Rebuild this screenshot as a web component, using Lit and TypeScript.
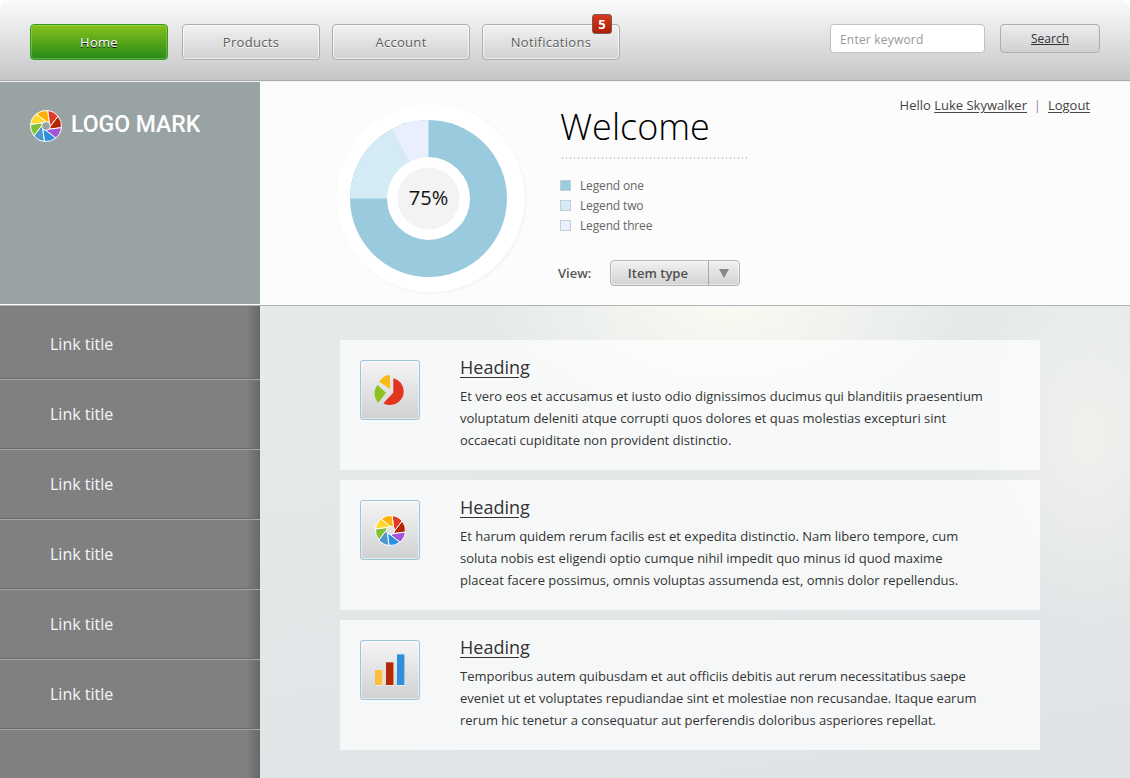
import { css, html, svg, LitElement } from "lit";
import { customElement } from "lit/decorators.js";

const BLADES = ["#e23a26", "#b52500", "#a553d9", "#2b8fe0", "#4f97cb", "#7fc035", "#ffd92f", "#ffb204"];

// aperture logo, eight blades around a small hole
function pinwheel(size: number) {
  const r = 15.5;
  const hole = 4.5;
  const at = (radius: number, deg: number) => {
    const a = (deg * Math.PI) / 180;
    return `${(radius * Math.sin(a)).toFixed(2)} ${(-radius * Math.cos(a)).toFixed(2)}`;
  };
  return html`<svg width=${size} height=${size} viewBox="-16 -16 32 32">
    ${BLADES.map((color, i) => {
      const a = 6 + i * 45;
      const d = `M${at(r, a)} A${r} ${r} 0 0 1 ${at(r, a + 45)} L${at(hole, a + 85)} L${at(hole, a + 40)} Z`;
      return svg`<path d=${d} fill=${color} stroke="#fff" stroke-width="1" stroke-linejoin="round"></path>`;
    })}
  </svg>`;
}

const pieIcon = html`<svg width="60" height="60" viewBox="0 0 60 60">
  <path d="M33.3 18.3 A13.6 13.6 0 1 1 23.3 43.3 L33.3 32.7 Z" fill="#e2351f"></path>
  <path d="M17.4 25 A13.6 13.6 0 0 0 18.3 42.7 L26 32.7 Z" fill="#8cc11f"></path>
  <path d="M19.3 21.7 A13.6 13.6 0 0 1 30 15 L30 29 Z" fill="#fdb913"></path>
</svg>`;

const barsIcon = html`<svg width="60" height="60" viewBox="0 0 60 60">
  <rect x="15" y="30" width="8" height="15.5" fill="#fff"></rect>
  <rect x="26" y="22" width="8" height="23.5" fill="#fff"></rect>
  <rect x="37" y="14" width="8" height="31.5" fill="#fff"></rect>
  <rect x="15" y="30" width="7.5" height="15" fill="#fdbf3f"></rect>
  <rect x="26" y="22.3" width="7.5" height="22.7" fill="#b52a06"></rect>
  <rect x="37" y="14.3" width="7.5" height="30.7" fill="#2f8fdc"></rect>
</svg>`;

const CARDS = [
  {
    icon: pieIcon,
    text: "Et vero eos et accusamus et iusto odio dignissimos ducimus qui blanditiis praesentium voluptatum deleniti atque corrupti quos dolores et quas molestias excepturi sint occaecati cupiditate non provident distinctio.",
  },
  {
    icon: pinwheel(31),
    text: "Et harum quidem rerum facilis est et expedita distinctio. Nam libero tempore, cum soluta nobis est eligendi optio cumque nihil impedit quo minus id quod maxime placeat facere possimus, omnis voluptas assumenda est, omnis dolor repellendus.",
  },
  {
    icon: barsIcon,
    text: "Temporibus autem quibusdam et aut officiis debitis aut rerum necessitatibus saepe eveniet ut et voluptates repudiandae sint et molestiae non recusandae. Itaque earum rerum hic tenetur a consequatur aut perferendis doloribus asperiores repellat.",
  },
];

const LEGEND = [
  { label: "Legend one", cls: "one" },
  { label: "Legend two", cls: "two" },
  { label: "Legend three", cls: "three" },
];

@customElement("app-root")
export class AppRoot extends LitElement {
  static styles = css`
    :host {
      display: block;
      width: 1130px;
      height: 778px;
      overflow: hidden;
      background: #fff;
      font-family: "Open Sans", "Noto Sans", sans-serif;
      color: #333;
    }

    .frame {
      height: 778px;
      border-radius: 10px 10px 0 0;
      overflow: hidden;
      display: flex;
      flex-direction: column;
    }

    /* top bar */
    header {
      flex: none;
      height: 81px;
      box-sizing: content-box;
      border-bottom: 1px solid #f2f3f3;
      background: linear-gradient(#a9abab, #a9abab) 0 80px / 100% 1px no-repeat,
        linear-gradient(#fafafa 0, #f4f4f4 12px, #c5c6c8 80px);
      display: flex;
      align-items: flex-start;
      padding-left: 30px;
    }

    .tabs {
      display: flex;
      gap: 12px;
      margin-top: 24px;
    }

    .tab {
      position: relative;
      box-sizing: border-box;
      width: 138px;
      height: 36px;
      display: flex;
      align-items: center;
      justify-content: center;
      border: 1px solid #adadae;
      border-radius: 4px;
      box-shadow: inset 0 0 0 1px rgba(255, 255, 255, 0.65);
      background: linear-gradient(#f2f2f2, #d1d1d3);
      color: #5c5c5c;
      font-size: 13px;
      letter-spacing: 0.3px;
      text-shadow: 0 1px 0 #fff;
    }

    .tab.active {
      margin-right: 2px;
      border: 1px solid #2f9d1e;
      box-shadow: inset 0 0 0 1px rgba(190, 230, 140, 0.35);
      background: linear-gradient(#86c21a, #288a1b);
      color: #fff;
      text-shadow: 0 1px 0 #111;
    }

    .badge {
      position: absolute;
      top: -11px;
      right: 7px;
      box-sizing: border-box;
      width: 20px;
      height: 20px;
      border: 1px solid #7c5a52;
      border-radius: 3px;
      display: flex;
      align-items: center;
      justify-content: center;
      background: linear-gradient(#d9381e, #ad1f06);
      color: #fff;
      font-size: 13px;
      font-weight: 700;
      letter-spacing: 0;
      text-shadow: none;
    }

    .search {
      margin-left: auto;
      margin-right: 30px;
      margin-top: 24px;
      display: flex;
      gap: 15px;
    }

    .search .field {
      box-sizing: border-box;
      width: 155px;
      height: 29px;
      padding: 1px 0 0 9px;
      display: flex;
      align-items: center;
      background: #fff;
      border: 1px solid #c2c2c4;
      border-radius: 4px;
      color: #999;
      font-size: 12px;
      letter-spacing: 0.2px;
    }

    .search .go {
      box-sizing: border-box;
      width: 100px;
      height: 29px;
      display: flex;
      align-items: center;
      justify-content: center;
      background: linear-gradient(#ededee, #cfd0d2);
      border: 1px solid #aeaeb0;
      border-radius: 4px;
      color: #333;
      font-size: 12px;
      text-decoration: underline;
    }

    /* hero row */
    .hero {
      flex: none;
      height: 222px;
      display: flex;
    }

    .brand {
      flex: none;
      width: 230px;
      padding: 28px 0 0 30px;
      background: #9aa3a3;
      display: flex;
      align-items: flex-start;
      gap: 9px;
    }

    .brand svg {
      flex: none;
    }

    .brand span {
      color: #fff;
      font-family: Roboto, "Liberation Sans", sans-serif;
      font-size: 23px;
      font-weight: 500;
      line-height: 29px;
    }

    .summary {
      flex: 1;
      position: relative;
      background: #fcfcfc;
      display: flex;
      padding-left: 70px;
    }

    .donut {
      flex: none;
      width: 200px;
      height: 200px;
      margin-top: 16px;
    }

    .donut text {
      font-family: "Open Sans", sans-serif;
      font-size: 20px;
      fill: #111;
    }

    .intro {
      margin-left: 30px;
      width: 260px;
    }

    h1 {
      margin: 20px 0 0;
      font-size: 36px;
      font-weight: 300;
      line-height: 50px;
      color: #000;
    }

    .dots {
      width: 187px;
      height: 2px;
      margin: 5px 0 0 2px;
      background: repeating-linear-gradient(90deg, #c2c6c6 0 1px, transparent 1px 4px);
    }

    .legend {
      margin-top: 17px;
      display: flex;
      flex-direction: column;
      gap: 2px;
    }

    .legend div {
      display: flex;
      align-items: center;
      gap: 9px;
      height: 18px;
      color: #666;
      font-size: 12px;
      letter-spacing: -0.15px;
    }

    .swatch {
      box-sizing: border-box;
      width: 11px;
      height: 11px;
      border: 1px solid #c4d0d6;
    }

    .swatch.one {
      background: #9acadd;
    }

    .swatch.two {
      background: #d4ebf5;
    }

    .swatch.three {
      background: #e9effd;
    }

    .view {
      margin: 26px 0 0 -2px;
      display: flex;
      align-items: center;
      gap: 19px;
      font-size: 13px;
      font-weight: 600;
      color: #555;
    }

    .select {
      box-sizing: border-box;
      width: 130px;
      height: 26px;
      display: flex;
      border: 1px solid #b4b4b6;
      border-radius: 4px;
      background: linear-gradient(#f1f1f1, #d3d3d5);
      box-shadow: inset 0 0 0 1px rgba(255, 255, 255, 0.5);
    }

    .select .value {
      box-sizing: border-box;
      width: 98px;
      padding-right: 4px;
      border-right: 1px solid #a9a9ab;
      text-align: center;
      line-height: 24px;
      color: #505050;
    }

    .select .arrow {
      flex: 1;
      display: flex;
      align-items: center;
      justify-content: center;
    }

    .arrow i {
      width: 0;
      height: 0;
      border-left: 5px solid transparent;
      border-right: 5px solid transparent;
      border-top: 9px solid #888;
    }

    .user {
      position: absolute;
      top: 14px;
      right: 40px;
      font-size: 13px;
      color: #444;
    }

    .user u {
      text-underline-offset: 2px;
    }

    .user b {
      font-weight: 400;
      margin: 0 3.5px;
      color: #888;
    }

    .rule {
      flex: none;
      height: 2px;
      background: linear-gradient(#fff 1px, #aeb0b0 1px);
    }

    /* lower part */
    .lower {
      flex: 1;
      display: flex;
      min-height: 0;
    }

    aside {
      flex: none;
      width: 260px;
      padding-top: 4px;
      background: linear-gradient(90deg, #808080 246px, #686868 260px);
      box-sizing: border-box;
    }

    aside a {
      box-sizing: border-box;
      display: flex;
      align-items: center;
      height: 70px;
      padding: 0 0 1px 50px;
      border-bottom: 1px solid #a6a6a6;
      box-shadow: inset 0 -1px 0 #686868;
      color: #f6f6f6;
      font-size: 16px;
    }

    main {
      flex: 1;
      padding: 34px 90px 0 80px;
      display: flex;
      flex-direction: column;
      gap: 10px;
      background:
        radial-gradient(ellipse 240px 130px at 470px 0, rgba(252, 251, 243, 0.95), rgba(252, 251, 243, 0)),
        radial-gradient(ellipse 130px 200px at 830px 130px, rgba(250, 248, 241, 0.6), rgba(250, 248, 241, 0)),
        linear-gradient(170deg, #e5ebeb, #dfe3e5);
    }

    .card {
      box-sizing: border-box;
      height: 130px;
      padding: 20px 50px 0 20px;
      display: flex;
      gap: 40px;
      background: rgba(255, 255, 255, 0.7);
    }

    .tile {
      flex: none;
      box-sizing: border-box;
      width: 60px;
      height: 60px;
      display: flex;
      align-items: center;
      justify-content: center;
      border: 1px solid #9cc3dc;
      border-radius: 3px;
      background: linear-gradient(#f5f5f5, #d0d1d2);
      box-shadow: inset 0 0 0 1px rgba(255, 255, 255, 0.5);
    }

    .tile svg {
      margin: -1px;
    }

    h2 {
      margin: -5px 0 0;
      font-size: 18px;
      font-weight: 400;
      line-height: 24px;
      color: #333;
      text-decoration: underline;
      text-underline-offset: 3px;
    }

    .card p {
      margin: 6px 0 0;
      max-width: 526px;
      font-size: 13px;
      line-height: 22px;
      color: #333;
    }
  `;

  render() {
    return html`
      <div class="frame">
        <header>
          <nav class="tabs">
            <div class="tab active">Home</div>
            <div class="tab">Products</div>
            <div class="tab">Account</div>
            <div class="tab">Notifications<span class="badge">5</span></div>
          </nav>
          <div class="search">
            <div class="field">Enter keyword</div>
            <div class="go">Search</div>
          </div>
        </header>

        <section class="hero">
          <div class="brand">${pinwheel(32)}<span>LOGO MARK</span></div>
          <div class="summary">
            <svg class="donut" viewBox="0 0 200 200">
              <defs>
                <filter id="soft" x="-10%" y="-10%" width="120%" height="120%">
                  <feDropShadow dx="1" dy="1" stdDeviation="1.5" flood-color="#000" flood-opacity="0.05"></feDropShadow>
                </filter>
              </defs>
              <circle cx="100.5" cy="100" r="94" fill="#fff" filter="url(#soft)"></circle>
              <circle cx="98.5" cy="100.5" r="78.5" fill="#9acadd"></circle>
              <path d="M20 100.5 A78.5 78.5 0 0 1 61.7 31.2 L98.5 100.5 Z" fill="#d4ebf5"></path>
              <path d="M61.7 31.2 A78.5 78.5 0 0 1 98.5 22 L98.5 100.5 Z" fill="#e9effd"></path>
              <circle cx="98.5" cy="100.5" r="41.5" fill="#fff"></circle>
              <circle cx="98.5" cy="100.5" r="31" fill="#f3f3f3"></circle>
              <text x="98.5" y="106.5" text-anchor="middle">75%</text>
            </svg>
            <div class="intro">
              <h1>Welcome</h1>
              <div class="dots"></div>
              <div class="legend">
                ${LEGEND.map(
                  (l) => html`<div><span class="swatch ${l.cls}"></span>${l.label}</div>`
                )}
              </div>
              <div class="view">
                <span>View:</span>
                <div class="select">
                  <div class="value">Item type</div>
                  <div class="arrow"><i></i></div>
                </div>
              </div>
            </div>
            <div class="user">Hello <u>Luke Skywalker</u> <b>|</b> <u>Logout</u></div>
          </div>
        </section>
        <div class="rule"></div>

        <section class="lower">
          <aside>
            ${[1, 2, 3, 4, 5, 6].map(() => html`<a>Link title</a>`)}
          </aside>
          <main>
            ${CARDS.map(
              (c) => html`
                <article class="card">
                  <div class="tile">${c.icon}</div>
                  <div>
                    <h2>Heading</h2>
                    <p>${c.text}</p>
                  </div>
                </article>
              `
            )}
          </main>
        </section>
      </div>
    `;
  }
}

declare global {
  interface HTMLElementTagNameMap {
    "app-root": AppRoot;
  }
}
